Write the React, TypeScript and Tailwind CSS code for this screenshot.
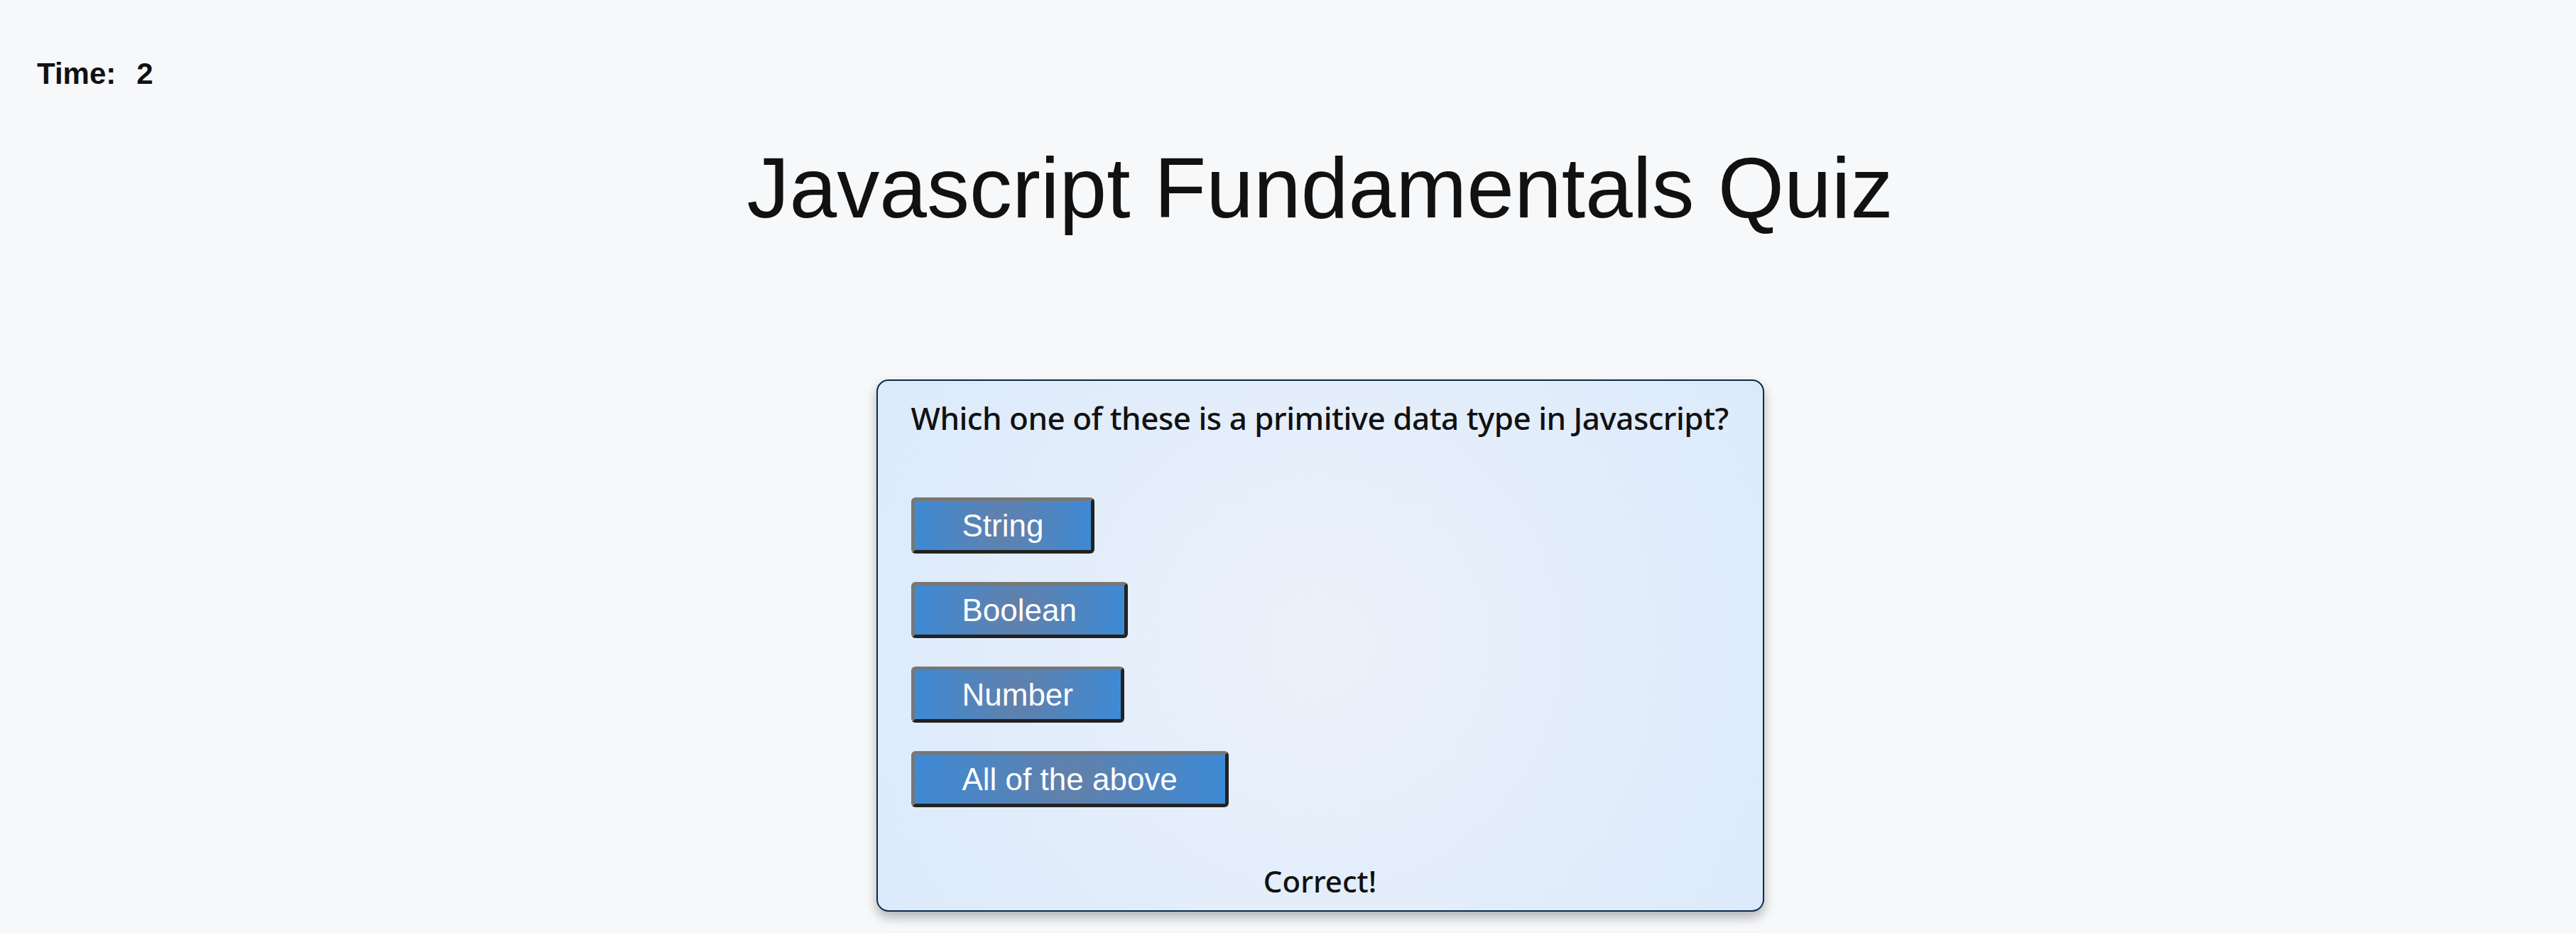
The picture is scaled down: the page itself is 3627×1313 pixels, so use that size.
const answers = ["String", "Boolean", "Number", "All of the above"];

// quiz card with one question and its choices
function QuizCard() {
  return (
    <div className="mx-auto mt-[210px] w-[1250px] rounded-[17px] border-2 border-[#0b2a48] bg-[radial-gradient(circle,#ecf1fa,#dbeafb)] px-[47px] pt-[22px] pb-[13px] shadow-[0_8px_16px_rgba(0,0,0,0.28)]">
      <p className="whitespace-nowrap font-['Noto_Sans',sans-serif] text-[44px] leading-[60px] font-medium tracking-[-0.5px] text-[#111]">
        Which one of these is a primitive data type in Javascript?
      </p>
      <div className="mt-[82px] flex flex-col items-start gap-[40px]">
        {answers.map((a) => (
          <button
            key={a}
            className="rounded-[6px] border-[5px] border-t-[#777] border-r-[#222] border-b-[#222] border-l-[#777] bg-[radial-gradient(circle,#6380a8,#3d8ad6)] px-[67px] py-[9px] font-['Liberation_Sans',Arial,sans-serif] text-[44px] leading-[51px] text-white"
          >
            {a}
          </button>
        ))}
      </div>
      <p className="mt-[76px] text-center font-['Noto_Sans',sans-serif] text-[42px] leading-[56px] font-medium text-[#111]">
        Correct!
      </p>
    </div>
  );
}

export default function App() {
  return (
    <div className="min-h-screen bg-[#f7f8fa] pt-[80px]">
      <div className="flex pl-[52px] font-['Liberation_Sans',Arial,sans-serif] text-[42px] leading-[48px] font-bold text-[#111]">
        <span>Time:</span>
        <span className="ml-[29px]">2</span>
      </div>
      <div className="pl-[90px]">
        <h1 className="mt-[76px] text-center font-['Liberation_Sans',Arial,sans-serif] text-[120px] leading-[120px] text-[#111]">
          Javascript Fundamentals Quiz
        </h1>
        <QuizCard />
      </div>
    </div>
  );
}
